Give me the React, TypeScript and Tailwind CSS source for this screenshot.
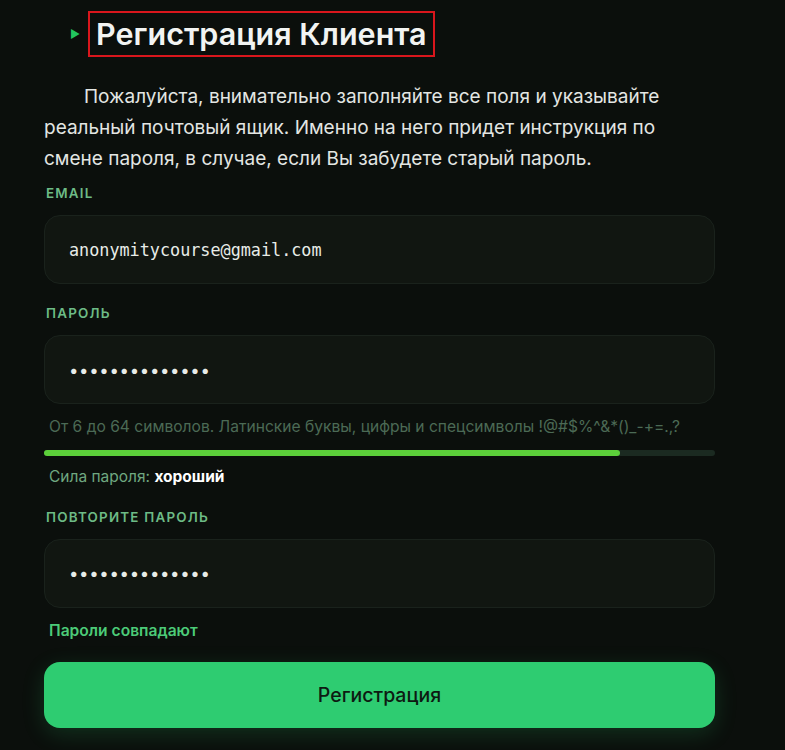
import { useState } from 'react'

const inputClass =
    'h-[69px] w-full rounded-2xl border border-[#1a221c] bg-[#111611] px-6 text-[16.8px] text-[#e8ece8] outline-none'

function FieldLabel({ children }: { children: string }) {
    return (
        <label className="block pl-0.5 text-[13.4px] font-semibold uppercase tracking-[0.09em] text-[#6dbb86]">
            {children}
        </label>
    )
}

export default function App() {
    const [email, setEmail] = useState('anonymitycourse@gmail.com')
    const [password, setPassword] = useState('password123456')
    const [repeat, setRepeat] = useState('password123456')

    // strength shown as a fraction of the track
    const strength = 0.859

    return (
        <div className="min-h-screen bg-[#0b0f0c] font-['Inter',sans-serif]">
            <div className="ml-[44px] w-[671px] pt-[11px] pb-6">
                <div className="flex items-center">
                    <span className="ml-[26px] mr-[8px] text-[11px] text-[#22c55e]">▶</span>
                    <h1 className="border-2 border-[#d9161c] px-[6px] py-[2px] text-[30.5px] font-semibold leading-[38px] text-[#f2f4f2]">
                        Регистрация Клиента
                    </h1>
                </div>

                <p className="mt-[24px] indent-10 text-[19px] leading-[31px] text-[#e3e6e3]">
                    Пожалуйста, внимательно заполняйте все поля и указывайте реальный почтовый ящик. Именно на него
                    придет инструкция по смене пароля, в случае, если Вы забудете старый пароль.
                </p>

                <form className="mt-[9px]" onSubmit={(e) => e.preventDefault()}>
                    <FieldLabel>Email</FieldLabel>
                    <input
                        type="email"
                        value={email}
                        onChange={(e) => setEmail(e.target.value)}
                        className={`${inputClass} mt-[12px] font-['DejaVu_Sans_Mono',monospace]`}
                    />

                    <div className="mt-[19px]">
                        <FieldLabel>Пароль</FieldLabel>
                    </div>
                    <input
                        type="password"
                        value={password}
                        onChange={(e) => setPassword(e.target.value)}
                        className={`${inputClass} mt-[12px] tracking-[0.04em]`}
                    />
                    <p className="mt-[11px] pl-[5px] text-[15.6px] text-[#4b6a55]">
                        От 6 до 64 символов. Латинские буквы, цифры и спецсимволы !@#$%^&*()_-+=.,?
                    </p>
                    <div className="mt-[11px] h-[6px] w-full rounded-full bg-[#1b2a21]">
                        <div className="h-full rounded-full bg-[#5ccf3a]" style={{ width: `${strength * 100}%` }} />
                    </div>
                    <p className="mt-[9px] pl-[5px] text-[15.5px] text-[#6fa880]">
                        Сила пароля: <span className="font-bold text-white">хороший</span>
                    </p>

                    <div className="mt-[19px]">
                        <FieldLabel>Повторите пароль</FieldLabel>
                    </div>
                    <input
                        type="password"
                        value={repeat}
                        onChange={(e) => setRepeat(e.target.value)}
                        className={`${inputClass} mt-[12px] tracking-[0.04em]`}
                    />
                    <p className="mt-[11px] pl-[5px] text-[15.6px] font-semibold text-[#4ccb78]">Пароли совпадают</p>

                    <button
                        type="submit"
                        className="mt-[20px] h-[66px] w-full rounded-2xl bg-[#2ecc71] text-[19.5px] font-medium text-[#0d1a12] shadow-[0_6px_22px_rgba(46,204,113,0.18)]"
                    >
                        Регистрация
                    </button>
                </form>
            </div>
        </div>
    )
}
